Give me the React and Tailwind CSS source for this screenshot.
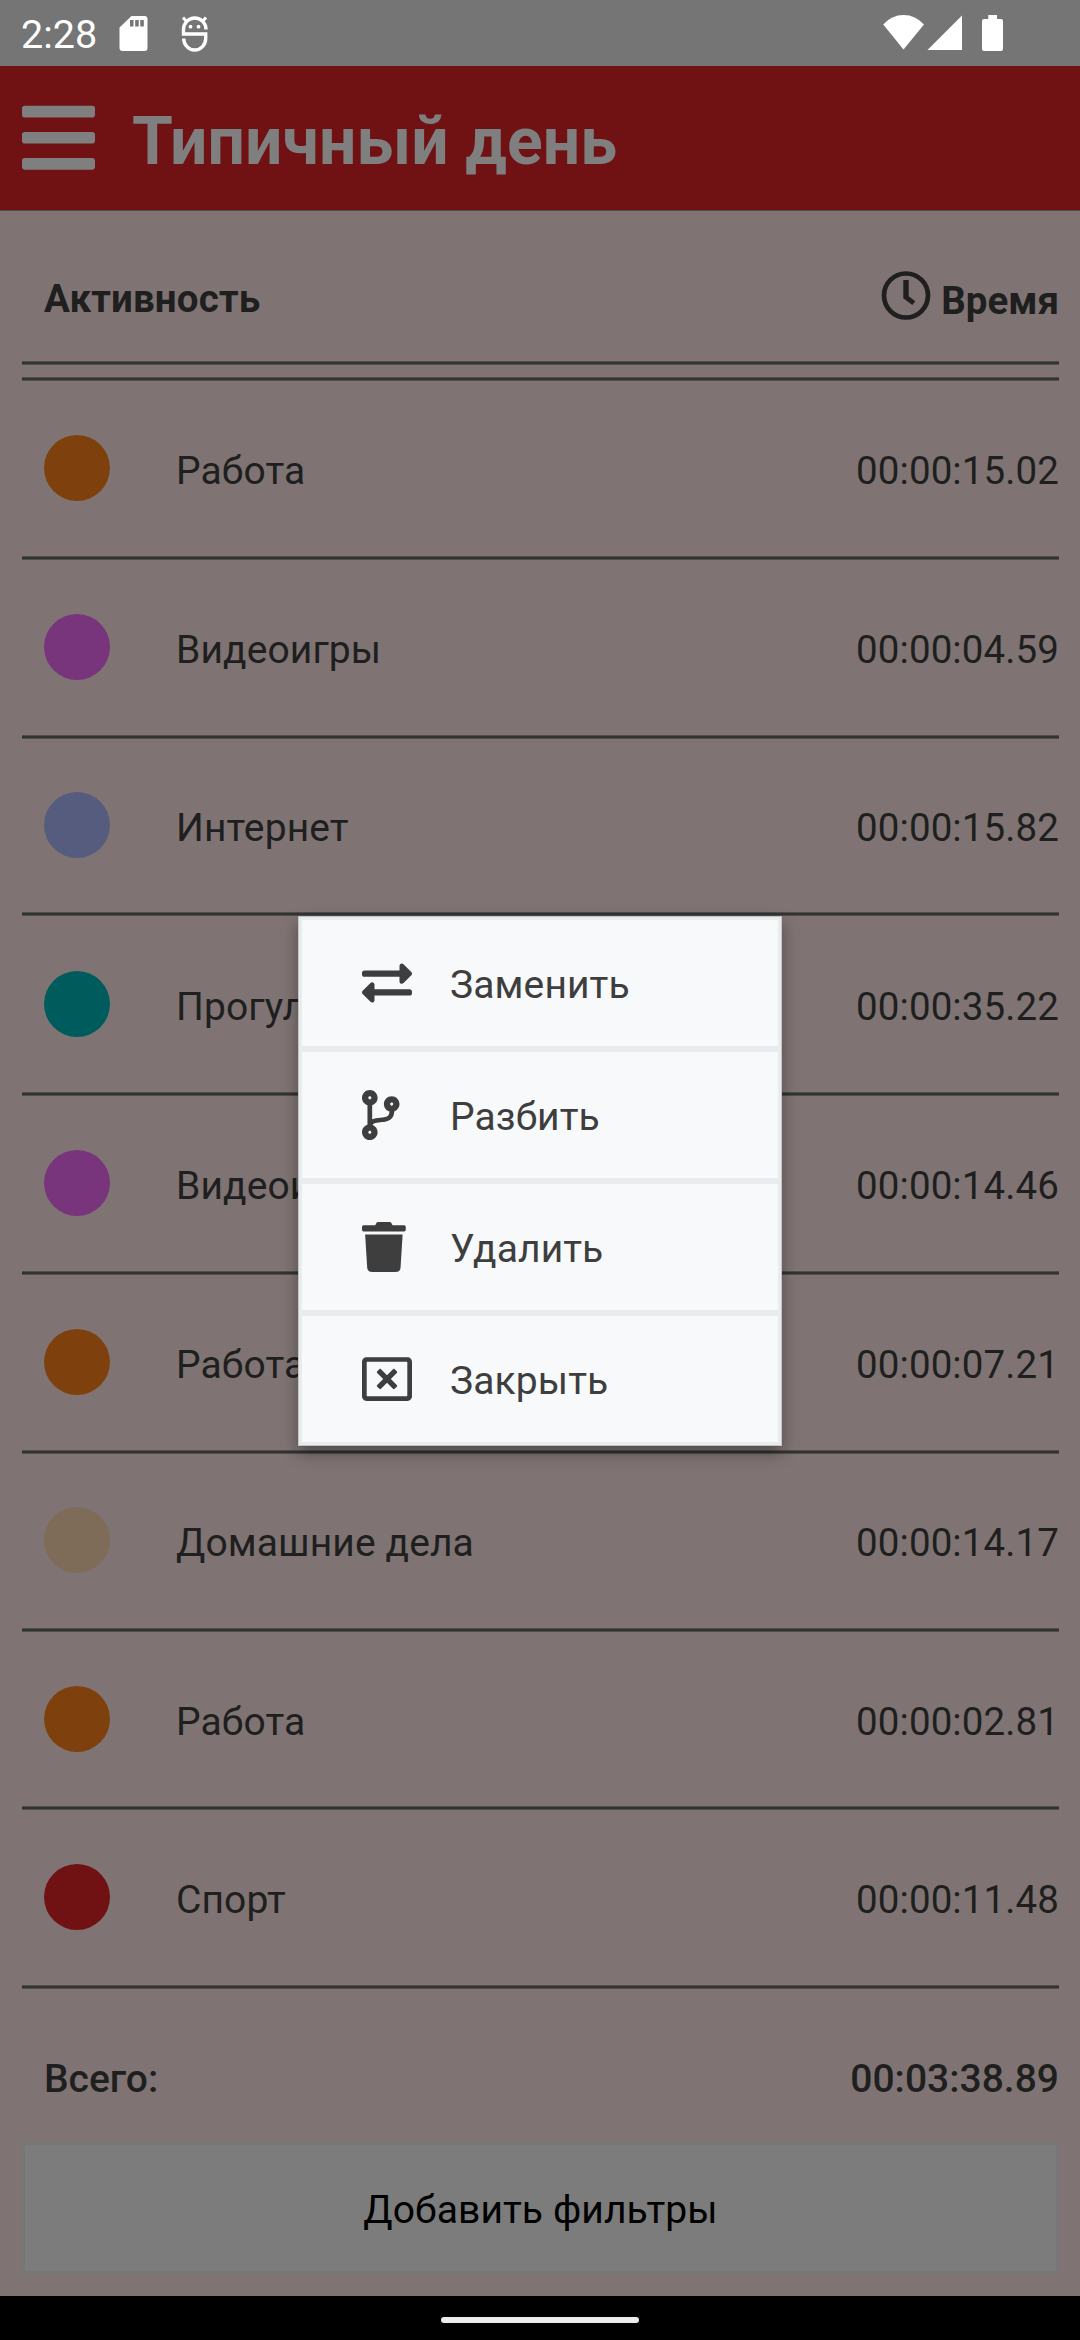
import React from "react";
import { FaBars, FaCodeBranch, FaExchangeAlt, FaRegWindowClose, FaTrash } from "react-icons/fa";

const ROWS = [
  { name: "Работа", time: "00:00:15.02", dot: "bg-[#7e410d]", height: "h-[179px]", pad: "pt-[54px]" },
  { name: "Видеоигры", time: "00:00:04.59", dot: "bg-[#78357b]", height: "h-[179px]", pad: "pt-[54px]" },
  { name: "Интернет", time: "00:00:15.82", dot: "bg-[#555c7d]", height: "h-[177px]", pad: "pt-[53px]" },
  { name: "Прогулка", time: "00:00:35.22", dot: "bg-[#005b5c]", height: "h-[180px]", pad: "pt-[55px]" },
  { name: "Видеоигры", time: "00:00:14.46", dot: "bg-[#78357b]", height: "h-[179px]", pad: "pt-[54px]" },
  { name: "Работа", time: "00:00:07.21", dot: "bg-[#7e410d]", height: "h-[179px]", pad: "pt-[54px]" },
  { name: "Домашние дела", time: "00:00:14.17", dot: "bg-[#7e6c58]", height: "h-[178px]", pad: "pt-[53px]" },
  { name: "Работа", time: "00:00:02.81", dot: "bg-[#7e410d]", height: "h-[178px]", pad: "pt-[54px]" },
  { name: "Спорт", time: "00:00:11.48", dot: "bg-[#701113]", height: "h-[179px]", pad: "pt-[54px]" },
];

const MENU = [
  { label: "Заменить", Icon: FaExchangeAlt, width: "w-[50px]" },
  { label: "Разбить", Icon: FaCodeBranch, width: "w-[37.5px]" },
  { label: "Удалить", Icon: FaTrash, width: "w-[43.75px]" },
  { label: "Закрыть", Icon: FaRegWindowClose, width: "w-[50px]" },
];

function Rule() {
  return <div className="h-1 border-y border-[#504d4c] bg-[#323333]" />;
}

function StatusBar() {
  return (
    <div className="flex h-[66px] bg-[#757575] text-white">
      <span className="ml-[21px] mt-[12px] w-[77px] whitespace-nowrap text-[39.5px] leading-[46px]">2:28</span>
      <svg className="ml-[21px] mt-4 h-[35px] w-[29px]" viewBox="0 0 29 35" fill="currentColor">
        <path
          fillRule="evenodd"
          d="M12.500 0H25.500Q28.500 0 28.500 3V32Q28.500 35 25.500 35H3.500Q.500 35 .500 32V11.500ZM11 4V10.500H14.500V4ZM16.200 4V10.500H19.700V4ZM21.300 4V10.500H24.800V4Z"
        />
      </svg>
      <svg className="ml-[33px] mt-4 h-[36px] w-[27px]" viewBox="0 0 27 36" fill="none" stroke="currentColor">
        <path d="M25 13.500A11.200 11.500 0 0 0 2.500 13.500V18H24.700V22.500A11 11.500 0 0 1 2.700 22.500" strokeWidth="3.400" />
        <path d="M2 1.500L6 6M25 1.500L21 6" strokeWidth="3" />
        <circle cx="9.500" cy="10.700" r="1.900" fill="currentColor" stroke="none" />
        <circle cx="17.500" cy="10.700" r="1.900" fill="currentColor" stroke="none" />
      </svg>
      <svg className="ml-auto mr-[76px] mt-[15px] h-[36px] w-[121px]" viewBox="883 15 121 36" fill="currentColor">
        <path d="M903.500 49.500L883.200 24.500Q891.500 15 903.500 15T924 24.500Z" />
        <path d="M962 15.500V50H927.500Z" />
        <path d="M988.300 15H997V19H1001Q1003 19 1003 21V49Q1003 51 1001 51H984Q982 51 982 49V21Q982 19 984 19H988.300Z" />
      </svg>
    </div>
  );
}

function Header() {
  return (
    <header className="flex h-[145px] border-b border-[#4e4a4a] bg-[#701213] text-[#7f7f7f]">
      <FaBars className="ml-[22px] mt-[30px] h-[83.5px] w-[73px]" />
      <h1 className="ml-[37px] mt-[37px] whitespace-nowrap text-[66px] font-bold leading-[78px] tracking-[0.1px]">
        Типичный день
      </h1>
    </header>
  );
}

function TableHead() {
  return (
    <div className="flex h-[150px] justify-between pl-[22px] text-[38.5px] font-bold">
      <span className="mt-[65px] tracking-[0.15px]">Активность</span>
      <div className="flex">
        <svg className="mr-[10px] mt-[60px] h-[50px] w-[50px]" viewBox="0 0 50 50" fill="currentColor">
          <circle cx="25" cy="24.500" r="22" fill="none" stroke="currentColor" strokeWidth="4.700" />
          <path d="M22.300 9H27.700V25.300L34.300 30.300L31.300 34L22.300 27.300Z" />
        </svg>
        <span className="mt-[67px]">Время</span>
      </div>
    </div>
  );
}

function ActivityRow({ name, time, dot, height, pad }) {
  return (
    <li className={height}>
      <Rule />
      <div className={`flex pl-[22px] ${pad}`}>
        <span className={`size-[66px] rounded-full ${dot}`} />
        <span className="ml-[66px] mt-[14px] whitespace-nowrap tracking-[0.1px]">{name}</span>
        <span className="ml-auto mt-[13px] text-[38.5px] tracking-[0.1px]">{time}</span>
      </div>
    </li>
  );
}

function ContextMenu() {
  return (
    <div className="absolute left-[298px] top-[916px] w-[484px] border border-[#c3c4c4] bg-[#f8f9fb] text-[#3e3e3e] shadow-[0_7px_15px_rgba(0,0,0,0.36)]">
      {MENU.map(({ label, Icon, width }) => (
        <div key={label} className="flex h-[132px] items-center border-[3px] border-[#e9ecee] pl-[60px]">
          <span className="w-[88px]">
            <Icon className={`h-[50px] ${width}`} />
          </span>
          <span className="mt-[5px] tracking-[0.1px]">{label}</span>
        </div>
      ))}
    </div>
  );
}

export default function App() {
  return (
    <div className="relative flex h-[2340px] w-[1080px] flex-col overflow-hidden bg-[#7f7473] font-['Roboto',sans-serif] text-[39px] leading-[45px] text-[#1e1f1e]">
      <StatusBar />
      <Header />
      <main className="flex-1 pl-[22px] pr-[21px]">
        <TableHead />
        <Rule />
        <ul className="mt-3">
          {ROWS.map((row, i) => (
            <ActivityRow key={i} {...row} />
          ))}
        </ul>
        <Rule />
        <div className="flex h-[153px] justify-between pl-[22px] pt-[68px] font-medium">
          <span>Всего:</span>
          <span>00:03:38.89</span>
        </div>
        <button className="flex h-[132px] w-full items-center justify-center border-[3px] border-[#747677] bg-[#7c7c7c] pt-[5px] tracking-[0.1px] text-black">
          Добавить фильтры
        </button>
      </main>
      <nav className="flex h-[44px] justify-center bg-black pt-[21px]">
        <span className="h-1.5 w-[198px] rounded-full bg-[#ececea]" />
      </nav>
      <ContextMenu />
    </div>
  );
}
